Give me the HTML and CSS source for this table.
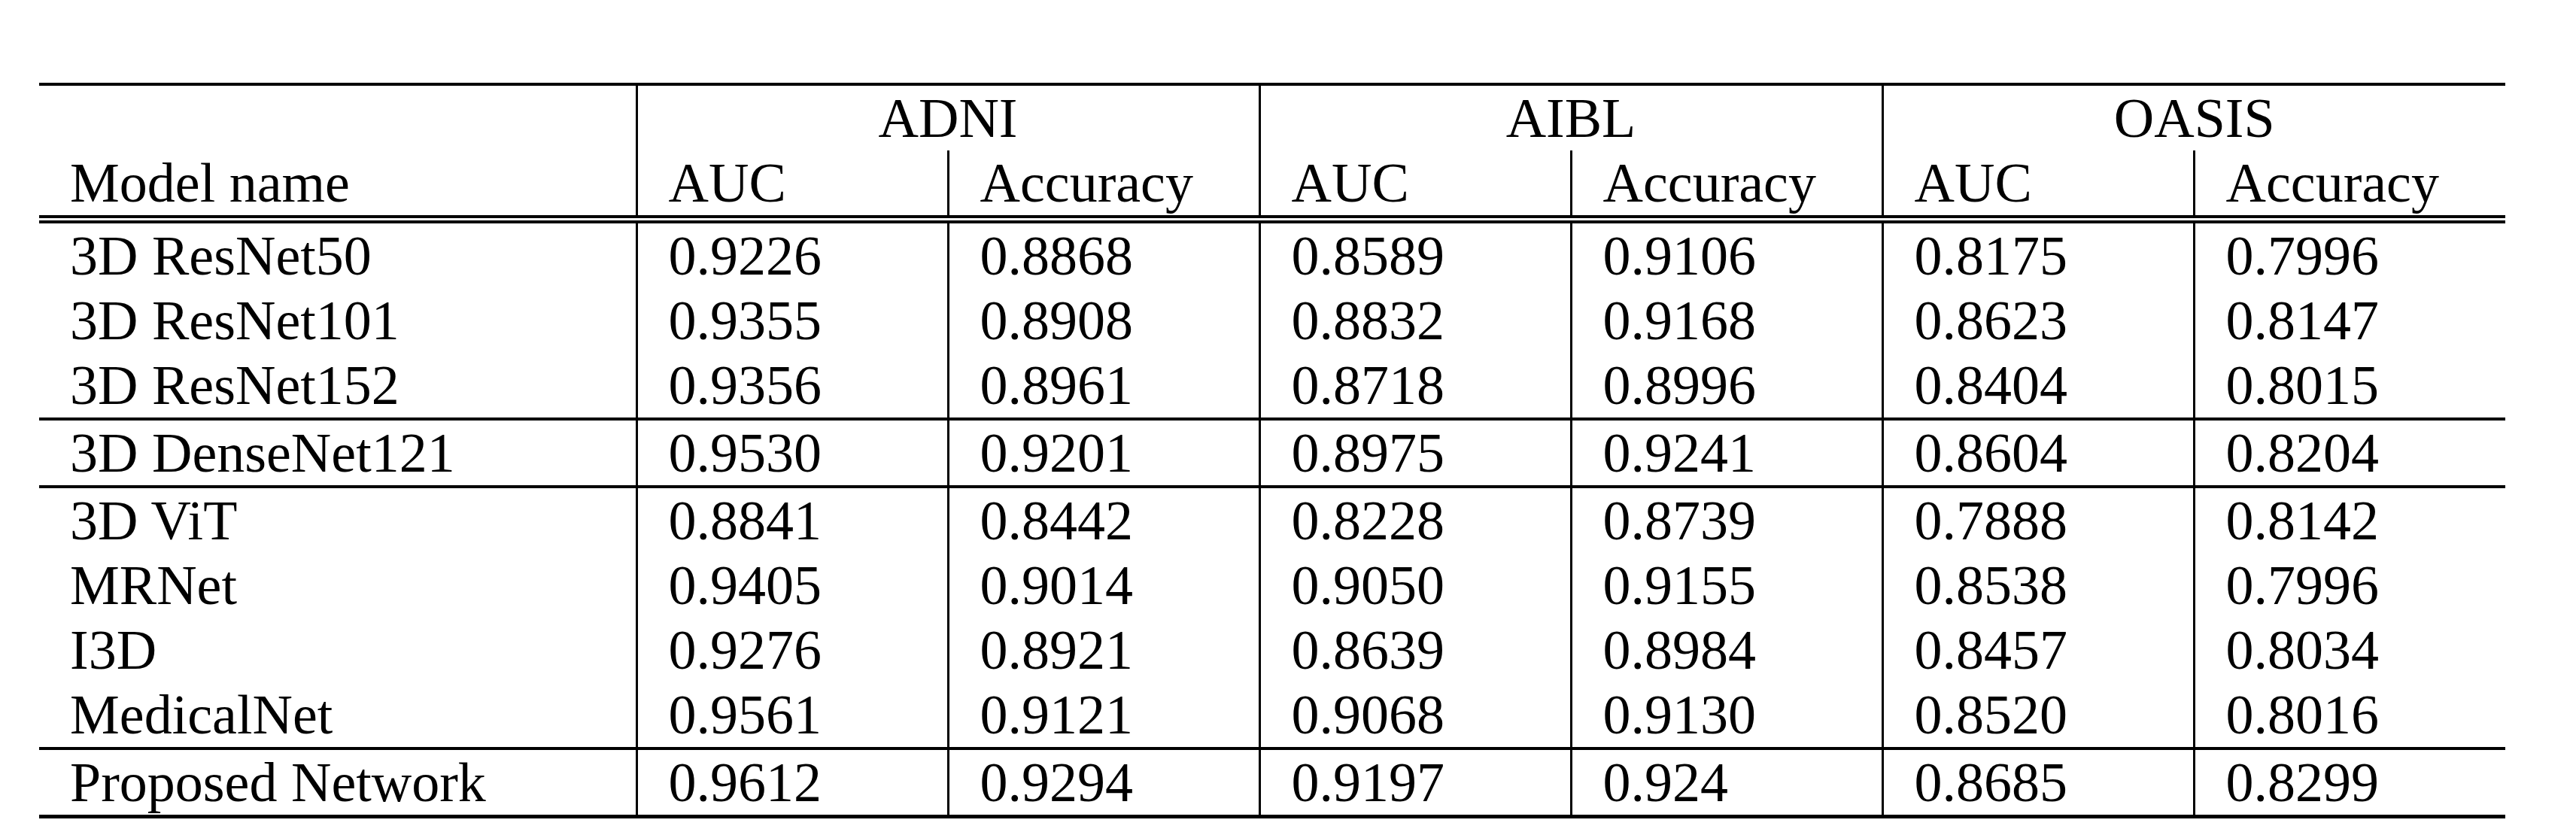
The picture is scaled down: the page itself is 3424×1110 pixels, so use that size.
FILE: index.html
```html
<!DOCTYPE html>
<html lang="en">
<head>
  <meta charset="UTF-8">
  <title>Model comparison</title>
  <link rel="stylesheet" href="styles.css">
</head>
<body>
  <!-- Results table: AUC / accuracy on three datasets -->
  <table class="results">
    <colgroup>
      <col class="col-name">
      <col><col><col><col><col><col>
    </colgroup>
    <thead>
      <tr>
        <th class="name" rowspan="2">Model name</th>
        <th class="group" colspan="2">ADNI</th>
        <th class="group" colspan="2">AIBL</th>
        <th class="group" colspan="2">OASIS</th>
      </tr>
      <tr class="sub">
        <th>AUC</th><th>Accuracy</th>
        <th>AUC</th><th>Accuracy</th>
        <th>AUC</th><th>Accuracy</th>
      </tr>
    </thead>
    <tbody>
      <tr><td>3D ResNet50</td><td>0.9226</td><td>0.8868</td><td>0.8589</td><td>0.9106</td><td>0.8175</td><td>0.7996</td></tr>
      <tr><td>3D ResNet101</td><td>0.9355</td><td>0.8908</td><td>0.8832</td><td>0.9168</td><td>0.8623</td><td>0.8147</td></tr>
      <tr><td>3D ResNet152</td><td>0.9356</td><td>0.8961</td><td>0.8718</td><td>0.8996</td><td>0.8404</td><td>0.8015</td></tr>
    </tbody>
    <tbody>
      <tr><td>3D DenseNet121</td><td>0.9530</td><td>0.9201</td><td>0.8975</td><td>0.9241</td><td>0.8604</td><td>0.8204</td></tr>
    </tbody>
    <tbody>
      <tr><td>3D ViT</td><td>0.8841</td><td>0.8442</td><td>0.8228</td><td>0.8739</td><td>0.7888</td><td>0.8142</td></tr>
      <tr><td>MRNet</td><td>0.9405</td><td>0.9014</td><td>0.9050</td><td>0.9155</td><td>0.8538</td><td>0.7996</td></tr>
      <tr><td>I3D</td><td>0.9276</td><td>0.8921</td><td>0.8639</td><td>0.8984</td><td>0.8457</td><td>0.8034</td></tr>
      <tr><td>MedicalNet</td><td>0.9561</td><td>0.9121</td><td>0.9068</td><td>0.9130</td><td>0.8520</td><td>0.8016</td></tr>
    </tbody>
    <tbody>
      <tr><td>Proposed Network</td><td>0.9612</td><td>0.9294</td><td>0.9197</td><td>0.924</td><td>0.8685</td><td>0.8299</td></tr>
    </tbody>
  </table>
</body>
</html>
```

FILE: styles.css
```css
body {
  margin: 0;
  background: #ffffff;
  color: #000000;
  font-family: 'Liberation Serif', 'Times New Roman', serif;
}
/* Table sits on a white page, lines in plain black */
.results {
  border-collapse: collapse;
  table-layout: fixed;
  width: 3278px;
  margin: 110px 0 0 52px;
  font-size: 74px;
  border-bottom: 5px solid #000;
}
.results .col-name {
  width: 794px;
}
.results th,
.results td {
  font-weight: normal;
  text-align: left;
  padding: 0 0 0 41px;
  line-height: 86px;
  white-space: nowrap;
  border-left: 3px solid #000;
}
.results th:first-child,
.results td:first-child {
  border-left: none;
}
.results .sub th:first-child {
  border-left: 3px solid #000;
}
.results th.name {
  vertical-align: bottom;
}
.results th.group {
  text-align: center;
  padding-left: 0;
}
/* Head: thick top rule, double rule below */
.results thead {
  border-top: 4px solid #000;
  border-bottom: 11px double #000;
}
/* Each model family is its own group */
.results tbody {
  border-top: 4px solid #000;
}
```
